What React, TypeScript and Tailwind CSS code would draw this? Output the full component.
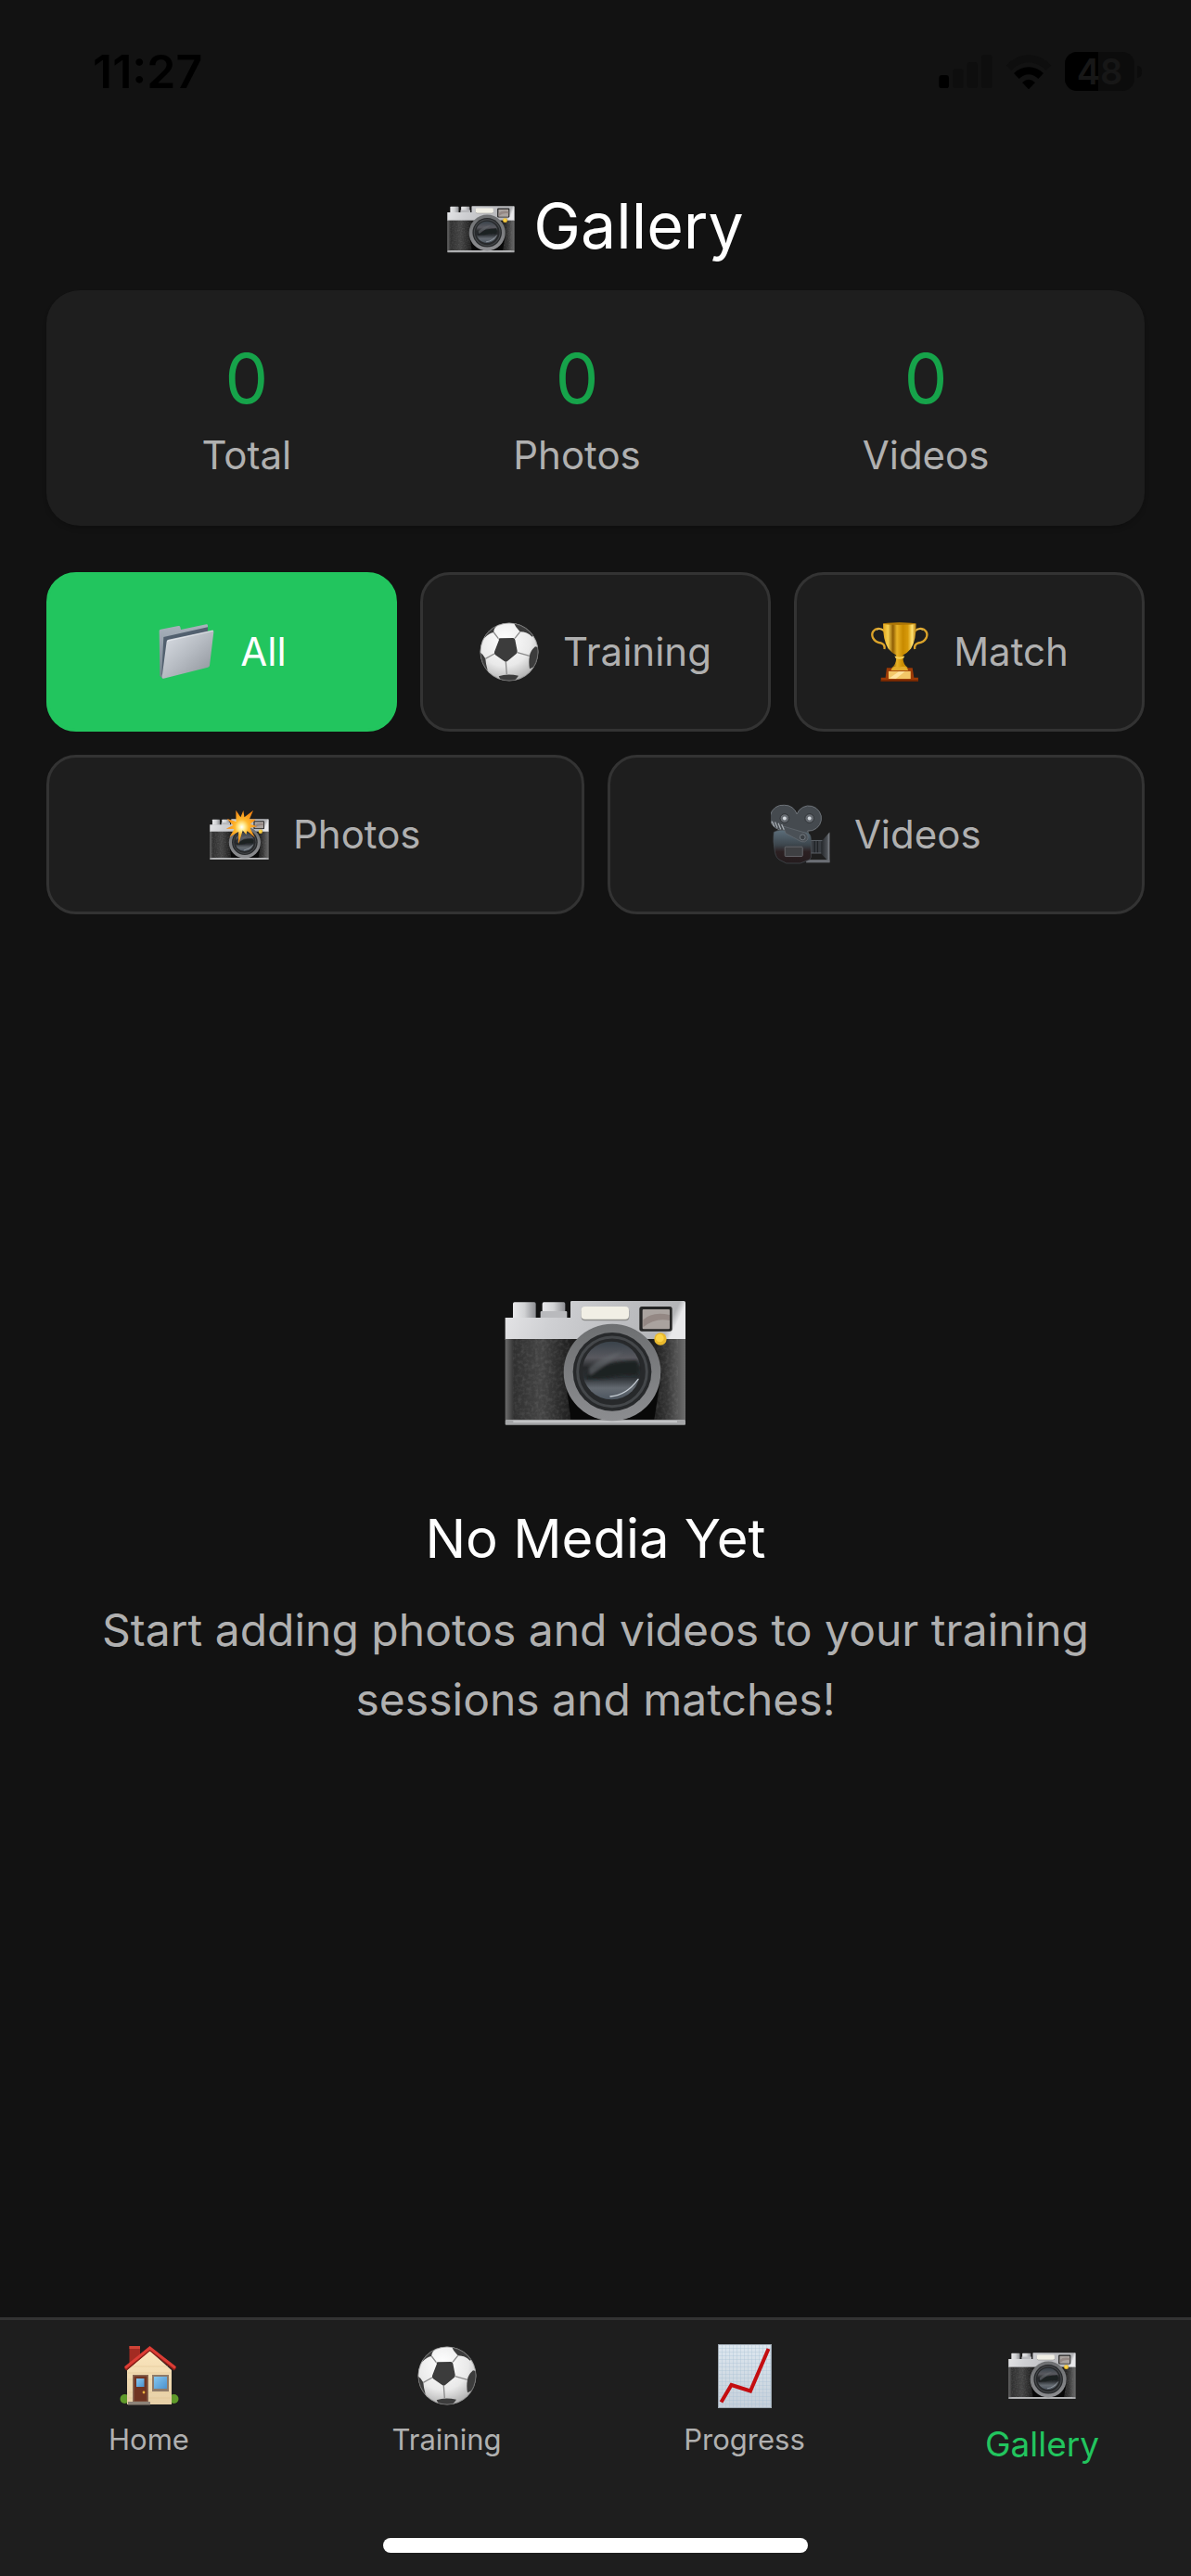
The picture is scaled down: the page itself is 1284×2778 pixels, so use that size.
import { useId, useState } from "react";
import type { ComponentType } from "react";

type IconProps = { className?: string };

function CameraBody({ id }: { id: string }) {
  return (
    <>
      <defs>
        <linearGradient id={`${id}top`} x1="0" y1="0" x2="1" y2="0.1">
          <stop offset="0" stopColor="#e6e6e8" />
          <stop offset="0.3" stopColor="#cfd0d3" />
          <stop offset="0.7" stopColor="#bcbdc0" />
          <stop offset="0.96" stopColor="#b4b5b8" />
          <stop offset="1" stopColor="#e8e8ea" />
        </linearGradient>
        <linearGradient id={`${id}skin`} x1="0" y1="0" x2="1" y2="0">
          <stop offset="0" stopColor="#6c6c6c" />
          <stop offset="0.05" stopColor="#303030" />
          <stop offset="0.2" stopColor="#444444" />
          <stop offset="0.36" stopColor="#1e1e1e" />
          <stop offset="0.8" stopColor="#161616" />
          <stop offset="0.9" stopColor="#363636" />
          <stop offset="1" stopColor="#6e6e6e" />
        </linearGradient>
        <linearGradient id={`${id}knob`} x1="0" y1="0" x2="1" y2="0">
          <stop offset="0" stopColor="#e9e9eb" />
          <stop offset="0.5" stopColor="#d2d3d5" />
          <stop offset="1" stopColor="#8d8e92" />
        </linearGradient>
        <linearGradient id={`${id}ring`} x1="0" y1="0" x2="0" y2="1">
          <stop offset="0" stopColor="#6d6f71" />
          <stop offset="1" stopColor="#8c8d90" />
        </linearGradient>
        <linearGradient id={`${id}glass`} x1="0" y1="0" x2="0" y2="1">
          <stop offset="0" stopColor="#39424a" />
          <stop offset="0.28" stopColor="#59595f" />
          <stop offset="0.45" stopColor="#26282a" />
          <stop offset="0.62" stopColor="#2b2f33" />
          <stop offset="0.8" stopColor="#646a71" />
          <stop offset="1" stopColor="#4d5660" />
        </linearGradient>
        <filter id={`${id}grain`} x="0" y="0" width="1" height="1">
          <feTurbulence type="fractalNoise" baseFrequency="0.09" numOctaves="2" seed="4" />
          <feColorMatrix values="0 0 0 0 1  0 0 0 0 1  0 0 0 0 1  0.9 0 0 0 -0.36" />
        </filter>
        <filter id={`${id}soft`}>
          <feGaussianBlur stdDeviation="5" />
        </filter>
      </defs>
      <rect x="95" y="101" width="74" height="56" rx="5" fill={`url(#${id}knob)`} />
      <rect x="190" y="101" width="74" height="56" rx="5" fill={`url(#${id}knob)`} />
      <rect x="184" y="130" width="86" height="26" rx="3" fill="#b9babd" />
      <path d="M70 151H281V101q0-4 4-4H648q5 0 5 5V222H70Z" fill={`url(#${id}top)`} />
      <rect x="70" y="220" width="583" height="262" fill={`url(#${id}skin)`} />
      <rect x="95" y="222" width="190" height="258" filter={`url(#${id}grain)`} opacity="0.22" />
      <rect x="552" y="222" width="76" height="258" filter={`url(#${id}grain)`} opacity="0.22" />
      <path d="M262 330L282 480H552L575 330Z" fill="#080808" />
      <rect x="70" y="481" width="583" height="17" rx="3" fill="#a5a6a8" />
      <rect x="96" y="485" width="530" height="5" fill="#c9cacc" />
      <rect x="316" y="119" width="155" height="42" rx="12" fill="#8d8d8b" />
      <rect x="316" y="115" width="154" height="41" rx="12" fill="#f1efe5" />
      <rect x="504" y="115" width="106" height="80" rx="8" fill="#242424" />
      <rect x="514" y="124" width="88" height="64" rx="3" fill="#aaa39f" />
      <path d="M516 158Q545 130 602 142V160Q555 150 516 182Z" fill="#948884" />
      <circle cx="416" cy="328" r="157" fill={`url(#${id}ring)`} />
      <circle cx="416" cy="326" r="127" fill="#27292b" />
      <circle cx="416" cy="326" r="112" fill="none" stroke="#44474a" strokeWidth="9" />
      <circle cx="414" cy="322" r="94" fill={`url(#${id}glass)`} />
      <g filter={`url(#${id}soft)`}>
        <path d="M332 340Q390 290 496 290Q506 310 498 338Q450 332 400 346Q360 350 332 350Z" fill="#1f2123" />
        <path d="M340 314Q390 270 450 262Q400 300 345 338Z" fill="#64676c" opacity="0.6" />
      </g>
      <path d="M410 406Q462 402 500 350" stroke="#c4cbd2" strokeWidth="4" fill="none" strokeLinecap="round" />
      <circle cx="572" cy="220" r="20" fill="#e9b82c" />
      <circle cx="570" cy="217" r="13" fill="#fbd348" />
    </>
  );
}

function CameraIcon({ className }: IconProps) {
  const id = useId();
  return (
    <svg viewBox="68 94 588 408" className={className} aria-hidden="true">
      <CameraBody id={id} />
    </svg>
  );
}

function FlashCameraIcon({ className }: IconProps) {
  const id = useId();
  return (
    <svg viewBox="68 2 588 500" className={className} aria-hidden="true">
      <defs>
        <radialGradient id={`${id}flash`}>
          <stop offset="0" stopColor="#ffffff" />
          <stop offset="0.18" stopColor="#fff0a0" />
          <stop offset="0.45" stopColor="#ffb92e" />
          <stop offset="1" stopColor="#f58410" />
        </radialGradient>
      </defs>
      <CameraBody id={id} />
      <path
        d="M328 8L375 78L402 12L412 78L500 12L462 98L526 100L470 146L540 170L468 184L515 278L440 214L430 250L396 208L354 344L354 222L265 276L312 196L232 192L300 158L240 94L330 122Z"
        fill={`url(#${id}flash)`}
      />
    </svg>
  );
}

function FolderIcon({ className }: IconProps) {
  const id = useId();
  return (
    <svg viewBox="34 42 180 178" className={className} aria-hidden="true">
      <defs>
        <linearGradient id={`${id}f`} x1="0" y1="0" x2="1" y2="1">
          <stop offset="0" stopColor="#dde1e7" />
          <stop offset="0.5" stopColor="#b6bbc2" />
          <stop offset="1" stopColor="#8b9097" />
        </linearGradient>
        <linearGradient id={`${id}b`} x1="0" y1="0" x2="0" y2="1">
          <stop offset="0" stopColor="#a9b2bc" />
          <stop offset="1" stopColor="#74808d" />
        </linearGradient>
      </defs>
      <path d="M36 64Q36 60 41 59L98 48Q103 47 104 52L106 60L188 43Q193 42 193 47V120L48 218L38 210Z" fill={`url(#${id}b)`} />
      <path d="M50 84L193 52V80L62 120L48 210L44 204Z" fill="#52606f" />
      <path d="M60 98Q61 93 66 92L206 62Q213 61 212 68L199 176Q198 181 193 182L50 218Q44 219 45 212Z" fill={`url(#${id}f)`} />
      <path d="M61 97L210 64" stroke="#eceff3" strokeWidth="2" />
    </svg>
  );
}

function BallIcon({ className }: IconProps) {
  const id = useId();
  return (
    <svg viewBox="1076 35 192 192" className={className} aria-hidden="true">
      <defs>
        <radialGradient id={`${id}g`} cx="0.42" cy="0.3" r="0.75">
          <stop offset="0" stopColor="#ffffff" />
          <stop offset="0.6" stopColor="#e9e9e9" />
          <stop offset="1" stopColor="#a9a9a9" />
        </radialGradient>
        <clipPath id={`${id}c`}>
          <circle cx="1172" cy="131" r="94" />
        </clipPath>
      </defs>
      <circle cx="1172" cy="131" r="94" fill={`url(#${id}g)`} />
      <g clipPath={`url(#${id}c)`}>
        <g fill="#3c3c3c">
          <path d="M1139 92Q1135 87 1142 87L1184 86Q1190 86 1191 92L1198 128Q1199 133 1195 137L1166 161Q1161 165 1156 161L1127 141Q1122 137 1124 131Z" />
          <path d="M1186 36Q1192 52 1207 66Q1230 66 1246 82L1262 70L1220 30Z" />
          <path d="M1256 114Q1240 128 1238 144Q1234 164 1238 186L1272 170V118Z" />
          <path d="M1138 210Q1164 200 1202 208L1184 232H1150Z" />
          <path d="M1074 130Q1090 140 1095 153Q1096 170 1102 190L1082 190L1070 150Z" />
          <path d="M1138 40Q1120 56 1122 68Q1108 70 1092 86L1096 60L1120 40Z" />
        </g>
        <path
          d="M1137 88L1122 68M1190 87L1207 66M1198 133L1238 144M1161 164L1164 204M1124 137L1095 153"
          stroke="#8b8b8b"
          strokeWidth="4"
          fill="none"
        />
      </g>
      <circle cx="1172" cy="131" r="93" fill="none" stroke="#8a8a8a" strokeWidth="2" />
    </svg>
  );
}

function TrophyIcon({ className }: IconProps) {
  const id = useId();
  return (
    <svg viewBox="355 28 196 202" className={className} aria-hidden="true">
      <defs>
        <linearGradient id={`${id}g`} x1="0" y1="0" x2="1" y2="0">
          <stop offset="0" stopColor="#e0a51d" />
          <stop offset="0.15" stopColor="#f6cf4e" />
          <stop offset="0.3" stopColor="#8f5e04" />
          <stop offset="0.42" stopColor="#e8b226" />
          <stop offset="0.6" stopColor="#c88a00" />
          <stop offset="0.75" stopColor="#d79a0a" />
          <stop offset="0.88" stopColor="#ffe172" />
          <stop offset="1" stopColor="#b87d08" />
        </linearGradient>
      </defs>
      <path
        d="M402 60Q388 48 374 54Q357 64 364 82Q372 98 392 100Q406 106 402 120M503 60Q517 48 531 54Q548 64 541 82Q533 98 513 100Q499 106 503 120"
        fill="none"
        stroke="#dba32a"
        strokeWidth="7"
      />
      <path
        d="M398 56Q386 50 376 57M507 56Q520 50 530 57"
        fill="none"
        stroke="#ffe07a"
        strokeWidth="2"
      />
      <path d="M398 36Q452 30 507 36Q508 92 490 118Q476 134 464 140V152Q464 170 480 182V190H426V182Q441 170 441 152V140Q429 134 415 118Q397 92 398 36Z" fill={`url(#${id}g)`} />
      <path d="M436 142Q452 150 469 142L466 150Q452 156 439 150Z" fill="#f7cf57" />
      <ellipse cx="452" cy="36" rx="54" ry="4" fill="#b07806" />
      <path d="M410 182H495L500 214H514V227H391V214H406Z" fill="#9c3a06" />
      <rect x="391" y="222" width="123" height="5" fill="#6f2603" />
      <path d="M424 190Q430 172 452 180Q475 172 481 190Z" fill="#e3ab2a" />
      <rect x="416" y="193" width="73" height="25" fill="#f3c768" />
      <path d="M418 216L450 194H470L440 218Z" fill="#ffe3a0" />
    </svg>
  );
}

function MovieCameraIcon({ className }: IconProps) {
  const id = useId();
  return (
    <svg viewBox="32 618 198 202" className={className} aria-hidden="true">
      <defs>
        <linearGradient id={`${id}body`} x1="0" y1="0" x2="0" y2="1">
          <stop offset="0" stopColor="#5c6e7a" />
          <stop offset="0.45" stopColor="#3c454c" />
          <stop offset="0.65" stopColor="#2c2022" />
          <stop offset="1" stopColor="#241c1e" />
        </linearGradient>
        <linearGradient id={`${id}horn`} x1="0" y1="0" x2="1" y2="0">
          <stop offset="0" stopColor="#24272a" />
          <stop offset="0.7" stopColor="#4b4f54" />
          <stop offset="1" stopColor="#85898f" />
        </linearGradient>
      </defs>
      <path
        d="M77 622a42 42 0 0 1 42 30a42 42 0 1 1 36 56L160 730L100 712L60 704A42 42 0 0 1 77 622Z"
        fill="#454a4f"
        stroke="#6e747a"
        strokeWidth="3"
      />
      <circle cx="78" cy="666" r="15" fill="#666b71" stroke="#2f3336" strokeWidth="3" />
      <circle cx="161" cy="666" r="15" fill="#666b71" stroke="#2f3336" strokeWidth="3" />
      <circle cx="78" cy="666" r="6" fill="#d5dadf" />
      <circle cx="161" cy="666" r="6" fill="#d5dadf" />
      <rect x="164" y="740" width="40" height="42" fill="#393d42" stroke="#5d6268" strokeWidth="3" />
      <path d="M178 742V780M188 742V780" stroke="#1f2225" strokeWidth="4" />
      <path d="M200 744L228 712V814L200 784Z" fill={`url(#${id}horn)`} />
      <path d="M150 804H228V814H150Z" fill="#6b6e74" />
      <path d="M42 712Q60 702 86 708L150 712Q166 716 166 736V796Q164 806 150 808L130 816H84L64 806Q50 800 46 780Q38 740 42 712Z" fill={`url(#${id}body)`} stroke="#4b5258" strokeWidth="2" />
      <path d="M72 692L146 714Q160 722 154 738Q146 748 134 744L82 716Z" fill="#4a5056" stroke="#6a7076" strokeWidth="2" />
      <circle cx="138" cy="729" r="9" fill="#3b4045" stroke="#747a80" strokeWidth="3" />
      <path d="M36 676L44 694M46 678L54 698M57 682L65 702M68 686L76 704" stroke="#a5abb1" strokeWidth="4" />
      <rect x="79" y="761" width="59" height="32" rx="3" fill="#3f4043" stroke="#66676b" strokeWidth="3" />
    </svg>
  );
}

function HouseIcon({ className }: IconProps) {
  const id = useId();
  return (
    <svg viewBox="-1 -1 64 66" className={className} aria-hidden="true">
      <defs>
        <linearGradient id={`${id}w`} x1="0" y1="0" x2="0" y2="1">
          <stop offset="0" stopColor="#fbe6bd" />
          <stop offset="1" stopColor="#e6cfa6" />
        </linearGradient>
        <linearGradient id={`${id}g`} x1="0" y1="0" x2="1" y2="1">
          <stop offset="0" stopColor="#86c6ee" />
          <stop offset="1" stopColor="#4b93cf" />
        </linearGradient>
      </defs>
      <circle cx="4.5" cy="57" r="5" fill="#5f9a2a" />
      <circle cx="57.5" cy="57" r="5" fill="#5f9a2a" />
      <rect x="9.5" y="0" width="11.5" height="18" fill="#a32b22" />
      <rect x="9.5" y="0" width="11.5" height="3" fill="#d04437" />
      <path d="M31.5 5L55 26V63H7V26Z" fill={`url(#${id}w)`} />
      <path d="M12 22H51M8 36H54M8 29H54M8 50H54M8 56H54" stroke="#e0c898" strokeWidth="0.6" />
      <path d="M5 25L31.5 3L59 25" fill="none" stroke="#8e1f18" strokeWidth="4" />
      <path d="M5 23.5L31.5 2L59 23.5" fill="none" stroke="#dc3d35" strokeWidth="3" />
      <rect x="13" y="31" width="17" height="29" fill="#8a6a55" />
      <rect x="14.5" y="32.5" width="14" height="27" fill="#6f3422" />
      <rect x="17" y="35" width="8.5" height="9" fill={`url(#${id}g)`} />
      <circle cx="25" cy="50" r="1.4" fill="#e9b13f" />
      <rect x="34" y="31" width="18" height="18" fill="#8e7a68" />
      <rect x="36" y="33" width="14" height="13" fill={`url(#${id}g)`} />
      <rect x="8" y="60" width="24" height="3.5" fill="#8d8378" />
    </svg>
  );
}

function ChartIcon({ className }: IconProps) {
  const id = useId();
  return (
    <svg viewBox="0 0 58 69" className={className} aria-hidden="true">
      <defs>
        <linearGradient id={`${id}p`} x1="0" y1="0" x2="0" y2="1">
          <stop offset="0" stopColor="#dde7ef" />
          <stop offset="1" stopColor="#c6d0da" />
        </linearGradient>
        <pattern id={`${id}n`} width="4" height="4" patternUnits="userSpaceOnUse">
          <path d="M0 0H4M0 0V4" stroke="#a9bfd2" strokeWidth="0.7" />
        </pattern>
      </defs>
      <rect width="58" height="69" fill={`url(#${id}p)`} />
      <rect width="58" height="69" fill={`url(#${id}n)`} />
      <rect x="0.5" y="0.5" width="57" height="68" fill="none" stroke="#9da7b0" />
      <path d="M3.5 62.5L14.5 44L35 50.5L54.5 5" fill="none" stroke="#c40d10" strokeWidth="4" />
    </svg>
  );
}

function StatusBar() {
  return (
    <div className="flex h-[154px] items-center justify-between pr-[53px] pl-[100px]">
      <span className="text-[50px] leading-[60px] font-semibold text-black">11:27</span>
      <div className="flex items-center gap-[14px]">
        <svg viewBox="98 56 174 110" className="w-[58px]" aria-hidden="true">
          <rect x="99" y="122" width="32" height="43" rx="9" fill="#000" />
          <rect x="144" y="102" width="34" height="63" rx="9" fill="#0e0e0e" />
          <rect x="190" y="80" width="34" height="85" rx="9" fill="#0e0e0e" />
          <rect x="236" y="57" width="35" height="108" rx="9" fill="#0e0e0e" />
        </svg>
        <svg viewBox="314 50 150 116" className="w-[50px]" aria-hidden="true">
          <path d="M316 88Q347 54 389 54T462 88L445 104Q420 78 389 78T333 104Z" fill="#0e0e0e" />
          <path d="M341 113Q362 93 389 93T437 113L420 131Q406 117 389 117T358 131Z" fill="#000" />
          <path d="M368 143Q389 123 410 143L389 165Z" fill="#000" />
        </svg>
        <div className="flex items-center gap-[3px]">
          <div className="relative flex h-[42px] w-[75px] items-center justify-center rounded-[13px] bg-[#0c0c0c]">
            <div className="absolute inset-y-0 left-0 w-[48%] rounded-l-[13px] bg-black" />
            <span className="relative text-[38px] leading-[42px] font-semibold text-[#171717]">48</span>
          </div>
          <div className="h-[13px] w-[5px] rounded-r-full bg-[#0c0c0c]" />
        </div>
      </div>
    </div>
  );
}

const stats = [
  { label: "Total", value: 0 },
  { label: "Photos", value: 0 },
  { label: "Videos", value: 0 },
];

type Filter = { label: string; Icon: ComponentType<IconProps>; icon: string; span: string };

const filters: Filter[] = [
  { label: "All", Icon: FolderIcon, icon: "w-[60px]", span: "col-span-2" },
  { label: "Training", Icon: BallIcon, icon: "w-16", span: "col-span-2" },
  { label: "Match", Icon: TrophyIcon, icon: "w-16", span: "col-span-2" },
  { label: "Photos", Icon: FlashCameraIcon, icon: "w-16", span: "col-span-3" },
  { label: "Videos", Icon: MovieCameraIcon, icon: "w-16", span: "col-span-3" },
];

const tabs = [
  { label: "Home", Icon: HouseIcon, icon: "w-16" },
  { label: "Training", Icon: BallIcon, icon: "w-16" },
  { label: "Progress", Icon: ChartIcon, icon: "w-[58px]" },
  { label: "Gallery", Icon: CameraIcon, icon: "w-[73px]" },
];

export default function App() {
  const [active, setActive] = useState("All");
  const currentTab = "Gallery";

  return (
    <div className="flex min-h-screen flex-col bg-[#121212] font-['Inter',sans-serif] text-white">
      <StatusBar />

      <main className="flex flex-1 flex-col px-[50px]">
        <h1 className="flex items-center justify-center gap-5 pt-[46px] pb-[26px] text-[68px] leading-[87px] font-normal">
          <CameraIcon className="mt-2 w-[73px]" />
          Gallery
        </h1>

        <dl className="flex justify-around rounded-[36px] bg-[#1e1e1e] px-12 py-[50px] shadow-md">
          {stats.map((s) => (
            <div key={s.label} className="flex flex-col-reverse items-center gap-3">
              <dt className="text-[42px] leading-[52px] text-[#b0b0b0]">{s.label}</dt>
              <dd className="text-[74px] leading-[90px] text-[#16a34a]">{s.value}</dd>
            </div>
          ))}
        </dl>

        <div className="mt-[50px] grid grid-cols-6 gap-[25px]">
          {filters.map(({ label, Icon, icon, span }) => (
            <button
              key={label}
              type="button"
              aria-pressed={active === label}
              onClick={() => setActive(label)}
              className={`${span} flex h-[172px] items-center justify-center gap-[26px] rounded-[32px] border-3 text-[42px] leading-[52px] ${
                active === label
                  ? "border-[#22c55e] bg-[#22c55e] text-white"
                  : "border-[#333333] bg-[#1e1e1e] text-[#b0b0b0]"
              }`}
            >
              <span className="flex w-16 justify-center">
                <Icon className={icon} />
              </span>
              {label}
            </button>
          ))}
        </div>

        <section className="flex flex-1 flex-col items-center pt-[416px] text-center">
          <CameraIcon className="w-[196px]" />
          <h2 className="mt-[84px] text-[58px] leading-[74px] font-normal">No Media Yet</h2>
          <p className="mt-6 px-12 text-[48px] leading-[75px] text-[#b0b0b0]">
            Start adding photos and videos to your training sessions and matches!
          </p>
        </section>
      </main>

      <nav className="border-t-3 border-[#333333] bg-[#1e1e1e]">
        <div className="flex pt-6">
          {tabs.map(({ label, Icon, icon }) => (
            <a
              key={label}
              href={`#${label.toLowerCase()}`}
              aria-current={label === currentTab ? "page" : undefined}
              className="flex flex-1 flex-col items-center gap-[14px]"
            >
              <span className="flex h-[72px] items-center">
                <Icon className={icon} />
              </span>
              <span
                className={
                  label === currentTab
                    ? "text-[37px] leading-[48px] text-[#22c55e]"
                    : "text-[31px] leading-[38px] text-[#b0b0b0]"
                }
              >
                {label}
              </span>
            </a>
          ))}
        </div>
        <div className="flex justify-center pt-[77px] pb-[25px]">
          <div className="h-4 w-[458px] rounded-full bg-white" />
        </div>
      </nav>
    </div>
  );
}
